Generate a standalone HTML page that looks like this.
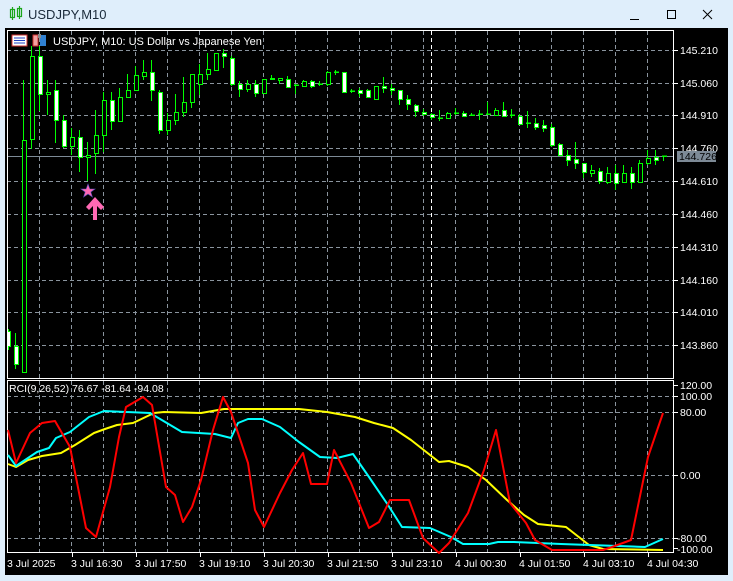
<!DOCTYPE html>
<html><head><meta charset="utf-8"><style>
html,body{margin:0;padding:0;width:733px;height:581px;overflow:hidden;background:#dcebf8;font-family:"Liberation Sans",sans-serif}
svg{position:absolute;left:0;top:0}
</style></head><body>
<svg width="733" height="581" viewBox="0 0 733 581" font-family="Liberation Sans, sans-serif">
<rect x="0" y="0" width="733" height="581" fill="#dfeefb"/>
<g stroke="#1aa51a" fill="none" stroke-width="1.2">
<line x1="12.5" y1="7" x2="12.5" y2="20"/><rect x="10.5" y="9.5" width="4" height="8"/>
<line x1="19.5" y1="6" x2="19.5" y2="19"/><rect x="17.5" y="8.5" width="4" height="8"/>
</g>
<text x="28" y="19" font-size="13" fill="#1a2a3a">USDJPY,M10</text>
<line x1="630" y1="19.5" x2="639" y2="19.5" stroke="#000" stroke-width="1"/>
<rect x="667.5" y="10.5" width="8" height="8" fill="none" stroke="#000"/>
<path d="M703 10 L712 19 M712 10 L703 19" stroke="#000" stroke-width="1"/>
<rect x="5" y="28" width="723" height="547" fill="#000"/>
<g stroke="#8a949e" stroke-dasharray="4,3" stroke-width="1">
<path d="M7 50.5H674M7 83.5H674M7 115.5H674M7 148.5H674M7 181.5H674M7 214.5H674M7 247.5H674M7 280.5H674M7 312.5H674M7 345.5H674"/>
<path d="M39.5 31V378M71.5 31V378M103.5 31V378M135.5 31V378M167.5 31V378M199.5 31V378M231.5 31V378M263.5 31V378M295.5 31V378M327.5 31V378M359.5 31V378M391.5 31V378M423.5 31V378M455.5 31V378M487.5 31V378M519.5 31V378M551.5 31V378M583.5 31V378M615.5 31V378M647.5 31V378"/>
<path d="M7 396.5H674M7 412.5H674M7 475.5H674M7 538.5H674"/>
<path d="M39.5 381V552M71.5 381V552M103.5 381V552M135.5 381V552M167.5 381V552M199.5 381V552M231.5 381V552M263.5 381V552M295.5 381V552M327.5 381V552M359.5 381V552M391.5 381V552M423.5 381V552M455.5 381V552M487.5 381V552M519.5 381V552M551.5 381V552M583.5 381V552M615.5 381V552M647.5 381V552"/>
</g>
<path d="M431.5 31V378M431.5 381V552" stroke="#fff" stroke-dasharray="4,3"/>
<line x1="7" y1="156.5" x2="674" y2="156.5" stroke="#7d8a96"/>
<g stroke="#00ff00" stroke-width="1">
<path d="M8.5 329V350M15.5 333V369M23.5 80V372M31.5 46V149M39.5 46V111M47.5 80V115M55.5 80V143M63.5 115V148M71.5 128V155M79.5 130V172M87.5 142V181M95.5 110V174M103.5 92V152M111.5 92V130M119.5 88V121M127.5 74V97M135.5 66V90M143.5 60V80M151.5 60V101M159.5 90V134M167.5 113V135M175.5 94V125M183.5 77V117M191.5 77V108M199.5 64V95M207.5 53V80M215.5 53V70M223.5 49V68M231.5 56V86M239.5 81V97M247.5 80V92M255.5 80V97M263.5 79V93M271.5 75V80M279.5 78V84M287.5 76V87M295.5 84V94M303.5 80V87M311.5 80V88M319.5 81V86M327.5 71V86M335.5 70V75M343.5 72V92M351.5 89V93M359.5 88V97M367.5 89V98M375.5 86V100M383.5 77V93M391.5 84V95M399.5 90V105M407.5 95V110M415.5 104V117M423.5 109V116M431.5 113V120M439.5 110V121M447.5 112V119M455.5 108V115M463.5 111V117M471.5 113V116M479.5 110V120M487.5 102V115M495.5 108V116M503.5 102V117M511.5 109V118M519.5 114V125M527.5 111V128M535.5 118V130M543.5 120V132M551.5 124V147M559.5 143V156M567.5 150V166M575.5 142V169M583.5 163V178M591.5 165V177M599.5 168V184M607.5 167V184M615.5 165V190M623.5 165V183M631.5 167V189M639.5 160V183M647.5 150V165M655.5 150V165M663.5 156V161"/>
</g>
<g stroke="#00ff00" stroke-width="1" transform="translate(1,0)">
<g fill="#fff">
<rect x="6.5" y="331.5" width="3" height="15"/>
<rect x="13.5" y="346.5" width="4" height="18"/>
<rect x="37.5" y="56.5" width="4" height="38"/>
<rect x="53.5" y="90.5" width="4" height="30"/>
<rect x="61.5" y="120.5" width="4" height="26"/>
<rect x="77.5" y="137.5" width="4" height="20"/>
<rect x="109.5" y="100.5" width="4" height="21"/>
<rect x="149.5" y="72.5" width="4" height="18"/>
<rect x="157.5" y="92.5" width="4" height="38"/>
<rect x="221.5" y="53.5" width="4" height="3"/>
<rect x="229.5" y="58.5" width="4" height="26"/>
<rect x="237.5" y="84.5" width="4" height="5"/>
<rect x="253.5" y="84.5" width="4" height="9"/>
<rect x="285.5" y="79.5" width="4" height="8"/>
<rect x="309.5" y="81.5" width="4" height="5"/>
<rect x="341.5" y="72.5" width="4" height="20"/>
<rect x="357.5" y="90.5" width="4" height="3"/>
<rect x="365.5" y="90.5" width="4" height="7"/>
<rect x="381.5" y="86.5" width="4" height="2"/>
<rect x="389.5" y="88.5" width="4" height="2"/>
<rect x="397.5" y="90.5" width="4" height="9"/>
<rect x="405.5" y="99.5" width="4" height="5"/>
<rect x="413.5" y="105.5" width="4" height="6"/>
<rect x="421.5" y="112.5" width="4" height="2"/>
<rect x="429.5" y="114.5" width="4" height="3"/>
<rect x="461.5" y="113.5" width="4" height="3"/>
<rect x="501.5" y="110.5" width="4" height="6"/>
<rect x="517.5" y="116.5" width="4" height="8"/>
<rect x="533.5" y="123.5" width="4" height="4"/>
<rect x="541.5" y="125.5" width="4" height="3"/>
<rect x="549.5" y="127.5" width="4" height="18"/>
<rect x="557.5" y="144.5" width="4" height="11"/>
<rect x="565.5" y="155.5" width="4" height="5"/>
<rect x="573.5" y="159.5" width="4" height="4"/>
<rect x="581.5" y="163.5" width="4" height="9"/>
<rect x="597.5" y="171.5" width="4" height="10"/>
<rect x="613.5" y="173.5" width="4" height="10"/>
<rect x="629.5" y="173.5" width="4" height="9"/>
<rect x="653.5" y="157.5" width="4" height="3"/>
</g>
<g fill="#000">
<rect x="21.5" y="140.5" width="4" height="232"/>
<rect x="29.5" y="56.5" width="4" height="83"/>
<rect x="45.5" y="92.5" width="4" height="2"/>
<rect x="69.5" y="137.5" width="4" height="9"/>
<rect x="85.5" y="155.5" width="4" height="2"/>
<rect x="93.5" y="135.5" width="4" height="18"/>
<rect x="101.5" y="100.5" width="4" height="35"/>
<rect x="117.5" y="97.5" width="4" height="24"/>
<rect x="125.5" y="90.5" width="4" height="7"/>
<rect x="133.5" y="75.5" width="4" height="15"/>
<rect x="141.5" y="72.5" width="4" height="4"/>
<rect x="165.5" y="120.5" width="4" height="10"/>
<rect x="173.5" y="112.5" width="4" height="8"/>
<rect x="181.5" y="102.5" width="4" height="10"/>
<rect x="189.5" y="74.5" width="4" height="28"/>
<rect x="197.5" y="74.5" width="4" height="10"/>
<rect x="205.5" y="69.5" width="4" height="5"/>
<rect x="213.5" y="53.5" width="4" height="17"/>
<rect x="245.5" y="84.5" width="4" height="5"/>
<rect x="261.5" y="79.5" width="4" height="14"/>
<rect x="269.5" y="78.5" width="4" height="1"/>
<rect x="277.5" y="78.5" width="4" height="2"/>
<rect x="293.5" y="85" width="4" height="0.5"/>
<rect x="301.5" y="81.5" width="4" height="5"/>
<rect x="317.5" y="84" width="4" height="0.5"/>
<rect x="325.5" y="72.5" width="4" height="12"/>
<rect x="333.5" y="72" width="4" height="0.5"/>
<rect x="349.5" y="91" width="4" height="0.5"/>
<rect x="373.5" y="86.5" width="4" height="13"/>
<rect x="437.5" y="118" width="4" height="0.5"/>
<rect x="445.5" y="113.5" width="4" height="5"/>
<rect x="453.5" y="113" width="4" height="0.5"/>
<rect x="469.5" y="115" width="4" height="0.5"/>
<rect x="477.5" y="114" width="4" height="0.5"/>
<rect x="485.5" y="114" width="4" height="0.5"/>
<rect x="493.5" y="110.5" width="4" height="5"/>
<rect x="509.5" y="115" width="4" height="0.5"/>
<rect x="525.5" y="123" width="4" height="0.5"/>
<rect x="589.5" y="170.5" width="4" height="3"/>
<rect x="605.5" y="173.5" width="4" height="9"/>
<rect x="621.5" y="173.5" width="4" height="9"/>
<rect x="637.5" y="163.5" width="4" height="19"/>
<rect x="645.5" y="158.5" width="4" height="5"/>
<rect x="661.5" y="156" width="4" height="0.5"/>
</g>
</g>
<polygon points="88,184 89.8,189 95,189 90.8,192 92.4,197 88,194 83.6,197 85.2,192 81,189 86.2,189" fill="#ff69b4" stroke="#6050c0" stroke-width="0.6"/>
<polygon points="95,197 104,207 101,210 97,206 97,220 93,220 93,206 89,210 86,207" fill="#ff69b4"/>
<rect x="7.5" y="30.5" width="666" height="348" fill="none" stroke="#fff"/>
<rect x="7.5" y="380.5" width="666" height="172" fill="none" stroke="#fff"/>
<g stroke="#fff"><path d="M674 50.5h4M674 83.5h4M674 115.5h4M674 148.5h4M674 181.5h4M674 214.5h4M674 247.5h4M674 280.5h4M674 312.5h4M674 345.5h4M674 385.5h4M674 396.5h4M674 412.5h4M674 475.5h4M674 538.5h4M674 548.5h4"/>
<path d="M72.5 553v4M136.5 553v4M200.5 553v4M264.5 553v4M328.5 553v4M392.5 553v4M456.5 553v4M520.5 553v4M584.5 553v4M648.5 553v4"/></g>
<g fill="#fff" font-size="10.5">
<text x="680" y="54">145.210</text><text x="680" y="87">145.060</text><text x="680" y="119">144.910</text><text x="680" y="152">144.760</text><text x="680" y="185">144.610</text><text x="680" y="218">144.460</text><text x="680" y="251">144.310</text><text x="680" y="284">144.160</text><text x="680" y="316">144.010</text><text x="680" y="349">143.860</text>
<text x="680" y="389">120.00</text><text x="680" y="400">100.00</text><text x="680" y="416">80.00</text><text x="680" y="479">0.00</text><text x="677" y="542">-80.00</text><text x="677" y="553">-100.00</text>
</g>
<rect x="677" y="151" width="39" height="11" fill="#7d8a96"/>
<text x="679" y="160" fill="#000" font-size="10.5">144.726</text>
<g fill="#fff" font-size="10.5">
<text x="7" y="567">3 Jul 2025</text><text x="71" y="567">3 Jul 16:30</text><text x="135" y="567">3 Jul 17:50</text><text x="199" y="567">3 Jul 19:10</text><text x="263" y="567">3 Jul 20:30</text><text x="327" y="567">3 Jul 21:50</text><text x="391" y="567">3 Jul 23:10</text><text x="455" y="567">4 Jul 00:30</text><text x="519" y="567">4 Jul 01:50</text><text x="583" y="567">4 Jul 03:10</text><text x="647" y="567">4 Jul 04:30</text>
</g>
<rect x="12" y="35" width="15" height="11" fill="#fff" stroke="#d03030"/>
<path d="M14 38h11M14 40.5h11M14 43h11" stroke="#2040c0"/>
<rect x="33" y="35" width="5" height="11" fill="#f0a0a0" stroke="#d03030"/>
<rect x="40" y="35" width="6" height="11" fill="#3080d0"/>
<rect x="38" y="34" width="3" height="4" fill="#888"/>
<text x="53" y="45" fill="#fff" font-size="11">USDJPY, M10:  US Dollar vs Japanese Yen</text>
<text x="9" y="392" fill="#fff" font-size="10.5">RCI(9,26,52) 76.67 -81.64 -94.08</text>
<g fill="none" stroke-width="2" stroke-linejoin="round">
<polyline stroke="#ffff00" points="8,464 16,467 28,460 42,456 61,453 75,445 94,433 105,429 117,425 133,423 154,413 164,412 201,413 224,409 262,409 299,409 327,412 355,417 374,423 393,428 411,440 439,462 449,461 468,467 486,480 507,500 524,515 538,524 566,527 589,545 603,549 663,550"/>
<polyline stroke="#00ffff" points="8,455 16,466 37,452 49,448 56,438 70,432 89,417 104,411 126,412 150,413 182,432 215,434 231,438 238,423 248,419 262,419 280,427 299,442 320,457 337,458 353,454 369,477 388,505 402,527 430,528 451,537 463,544 489,544 498,542 514,542 561,544 645,547 663,539"/>
<polyline stroke="#ff0000" points="8,430 16,463 30,433 42,423 55,421 70,447 86,528 96,537 110,487 119,437 126,407 143,397 152,405 166,487 175,495 183,522 192,507 201,480 213,430 223,397 231,412 248,463 255,510 264,527 280,493 292,470 303,453 311,484 327,484 334,450 351,483 369,528 379,522 390,500 409,500 423,538 439,553 449,543 468,513 484,470 496,430 510,503 526,523 535,540 552,550 603,550 612,547 631,540 648,457 663,413"/>
</g>
</svg>
</body></html>
